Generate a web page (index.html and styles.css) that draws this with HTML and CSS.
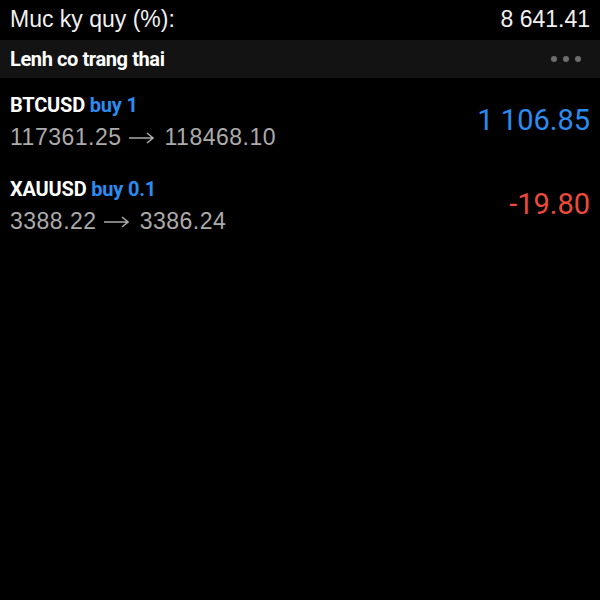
FILE: index.html
```html
<!DOCTYPE html>
<html lang="vi">
<head>
    <meta charset="UTF-8">
    <meta name="viewport" content="width=device-width, initial-scale=1.0">
    <title>Lenh co trang thai</title>
    <link rel="stylesheet" href="styles.css">
</head>
<body>

<div class="summary-row">
    <span>Muc ky quy (%):</span>
    <span>8 641.41</span>
</div>

<div class="section-bar">
    <span class="section-title">Lenh co trang thai</span>
    <span class="more-dots"><i></i><i></i><i></i></span>
</div>

<div class="position-row">
    <div class="position-info">
        <div class="position-title">BTCUSD <span class="side">buy 1</span></div>
        <div class="position-prices">117361.25<svg class="arrow" width="25" height="12" viewBox="0 0 25 12"><path d="M0 6H24M18 1L24 6L18 11"/></svg>118468.10</div>
    </div>
    <div class="profit profit-up">1 106.85</div>
</div>

<div class="position-row">
    <div class="position-info">
        <div class="position-title">XAUUSD <span class="side">buy 0.1</span></div>
        <div class="position-prices">3388.22<svg class="arrow" width="25" height="12" viewBox="0 0 25 12"><path d="M0 6H24M18 1L24 6L18 11"/></svg>3386.24</div>
    </div>
    <div class="profit profit-down">-19.80</div>
</div>

</body>
</html>
```

FILE: styles.css
```css
body {
    margin: 0;
    padding: 0;
    background-color: #000;
    color: #fff;
    font-family: 'Liberation Sans', Arial, sans-serif;
}
.summary-row {
    display: flex;
    justify-content: space-between;
    height: 40px;
    line-height: 38px;
    padding: 0 10px;
    font-size: 23px;
    color: #f0f0f0;
}
.section-bar {
    display: flex;
    justify-content: space-between;
    align-items: center;
    height: 38px;
    padding: 0 19px 0 10px;
    background-color: #131313;
}
.section-title {
    font-family: Roboto, sans-serif;
    font-weight: bold;
    font-size: 20px;
    letter-spacing: -0.4px;
    line-height: 38px;
}
.more-dots {
    display: flex;
    gap: 6px;
}
.more-dots i {
    width: 6px;
    height: 6px;
    border-radius: 50%;
    background-color: #6e6e6e;
}
.position-row {
    display: flex;
    justify-content: space-between;
    align-items: center;
    height: 64px;
    padding: 12px 10px 8px;
}
.position-title {
    font-family: Roboto, sans-serif;
    font-weight: bold;
    font-size: 20px;
    letter-spacing: -0.2px;
    line-height: 30px;
}
.side {
    color: #2b8cf0;
}
.position-prices {
    font-size: 23px;
    letter-spacing: 0.5px;
    line-height: 34px;
    color: #ababab;
}
.arrow {
    margin: 0 11px 0 7px;
    vertical-align: 1px;
    fill: none;
    stroke: #ababab;
    stroke-width: 1.5;
}
.profit {
    font-family: Roboto, sans-serif;
    font-size: 29px;
    margin-bottom: 4px;
}
.profit-up {
    color: #2b8cf0;
}
.profit-down {
    color: #ec4b3a;
}
```
